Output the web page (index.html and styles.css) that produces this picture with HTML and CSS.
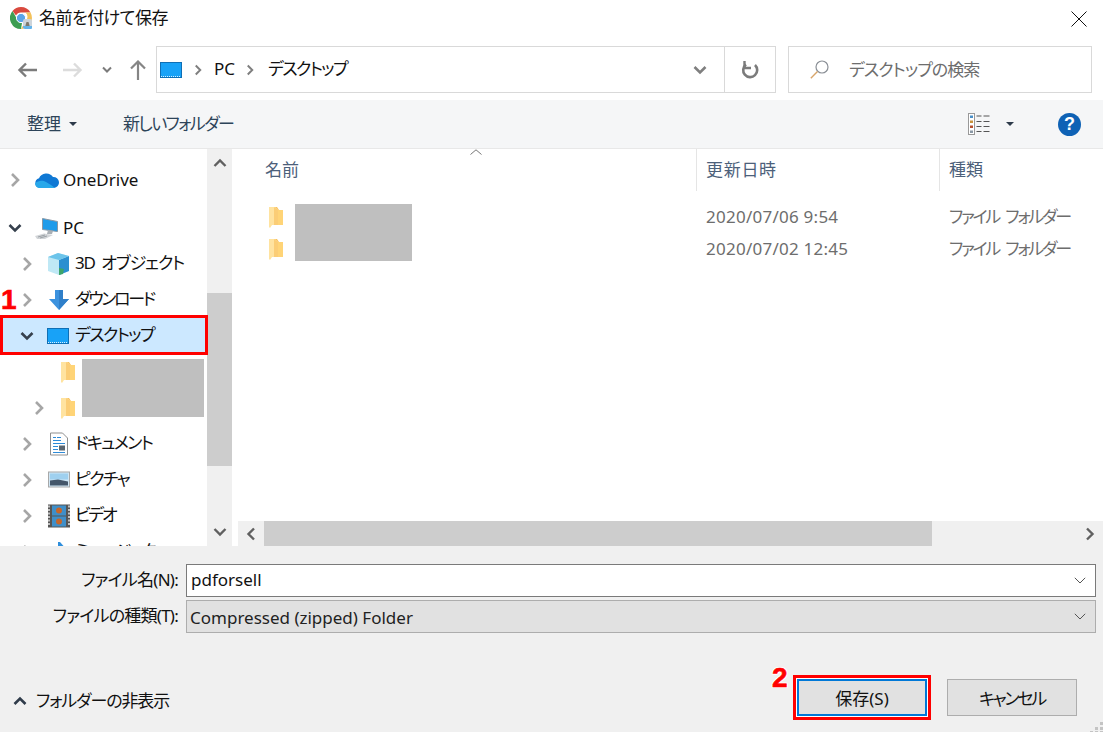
FILE: index.html
```html
<!DOCTYPE html>
<html lang="ja">
<head>
<meta charset="utf-8">
<title>名前を付けて保存</title>
<link rel="stylesheet" href="styles.css">
</head>
<body>
<svg class="sprite" aria-hidden="true">
  <defs>
    <symbol id="chev-r" viewBox="0 0 14 16"><path d="M4 2l6 6-6 6" fill="none" stroke="currentColor" stroke-width="2.6"/></symbol>
    <symbol id="chev-d" viewBox="0 0 14 16"><path d="M1.500 5l5.500 5.500L12.500 5" fill="none" stroke="currentColor" stroke-width="2.600"/></symbol>
    <symbol id="folder" viewBox="0 0 14 21">
      <path d="M3 0h5l2 3h4v15H3z" fill="#f9c262"/>
      <path d="M5 3h9v15H5z" fill="#ffd477"/>
      <path d="M0 0l6 0 2 2 1 1 0 15-6 0-2 3-1-1z" fill="#ffe3a0"/>
      <path d="M5 0l4 3v15H5z" fill="#fbcd76"/>
    </symbol>
    <symbol id="monitor" viewBox="0 0 22 16">
      <rect x=".5" y=".5" width="21" height="15" fill="#18a2f7" stroke="#0f6fb5"/>
      <path d="M1 14.500h20" stroke="#d9f0ff" stroke-width="1" stroke-dasharray="1 1"/>
    </symbol>
  </defs>
</svg>

<div class="dialog">
  <header class="titlebar">
    <svg class="chrome-icon" viewBox="0 0 22 22">
      <path d="M11 0a11 11 0 0 1 9.500 5.500H11a5.500 5.500 0 0 0-5 3L2.500 4A11 11 0 0 1 11 0z" fill="#d9493e"/>
      <path d="M20.500 5.500A11 11 0 0 1 11 22l5-8.500a5.500 5.500 0 0 0-.5-8z" fill="#f3c15a"/>
      <path d="M2.500 4L7 12a5 5 0 0 0 5 4l-1 6A11 11 0 0 1 2.500 4z" fill="#3d9e52"/>
      <circle cx="11" cy="11" r="4.600" fill="#5aa4e8" stroke="#fff"/>
      <rect x="13" y="12" width="9" height="9" rx="2" fill="#cdd4da"/>
      <path d="M15 20l1.500-5h2l1.500 5z" fill="#7d7a6e"/>
      <path d="M13 19h9v2a1 1 0 0 1-1 1h-6a2 2 0 0 1-2-2z" fill="#63b3ea"/>
    </svg>
    <span class="title sp-a">名前を付けて保存</span>
    <svg class="close-icon" viewBox="0 0 16 16"><path d="M.5.500l15 15M15.500.500l-15 15" stroke="#111" stroke-width="1" fill="none"/></svg>
  </header>

  <nav class="navbar">
    <div class="nav-buttons">
      <svg class="nav-back" viewBox="0 0 20 16"><path d="M9 1.500L2.500 8 9 14.500M2.500 8H20" fill="none" stroke="#7b7b7b" stroke-width="2.400"/></svg>
      <svg class="nav-forward" viewBox="0 0 20 16"><path d="M11 1.500L17.500 8 11 14.500M17.500 8H0" fill="none" stroke="#dcdcdc" stroke-width="2.400"/></svg>
      <svg class="nav-recent" viewBox="0 0 10 7"><path d="M1 1.500l4 4 4-4" fill="none" stroke="#7b7b7b" stroke-width="2"/></svg>
      <svg class="nav-up" viewBox="0 0 16 20"><path d="M1 8.500L8 1.500l7 7M8 1.500V20" fill="none" stroke="#858585" stroke-width="2.200"/></svg>
    </div>
    <div class="address">
      <svg class="addr-monitor"><use href="#monitor"/></svg>
      <svg class="addr-sep"><use href="#chev-r"/></svg>
      <span class="addr-pc">PC</span>
      <svg class="addr-sep addr-sep-2"><use href="#chev-r"/></svg>
      <span class="addr-text sp-c">デスクトップ</span>
      <svg class="addr-drop"><use href="#chev-d"/></svg>
      <div class="addr-refresh">
        <svg class="refresh-icon" viewBox="0 0 18 18"><path d="M5 3.500A7 7 0 1 0 14 4" fill="none" stroke="#7b7b7b" stroke-width="2.600"/><path d="M3.500 0v7.500H10" fill="none" stroke="#7b7b7b" stroke-width="2.400" transform="translate(0 -.5)"/></svg>
      </div>
    </div>
    <div class="search">
      <svg class="search-icon" viewBox="0 0 19 19"><circle cx="12" cy="7" r="6" fill="none" stroke="#8a8f96" stroke-width="1.200"/><path d="M7.500 11.500L.8 18.200" stroke="#d8a56a" stroke-width="1.400"/></svg>
      <span class="search-text sp-b">デスクトップの検索</span>
    </div>
  </nav>

  <div class="toolbar">
    <span class="tool-label">整理</span>
    <span class="caret"></span>
    <span class="tool-label tool-new sp-c">新しいフォルダー</span>
    <svg class="view-icon" viewBox="0 0 22 22">
      <rect x=".5" y=".5" width="6" height="21" fill="#fff" stroke="#999"/>
      <rect x="2" y="2.500" width="3" height="2.500" fill="#4a90c8"/>
      <rect x="2" y="7.500" width="3" height="2.500" fill="#c8923a"/>
      <rect x="2" y="12.500" width="3" height="2.500" fill="#b5502d"/>
      <rect x="2" y="17.500" width="3" height="2.500" fill="#8a98a5"/>
      <path d="M8.500 3h5M15.500 3h6M8.500 8.500h5M15.500 8.500h6M8.500 13.500h5M15.500 13.500h6M8.500 18.500h5M15.500 18.500h6" stroke="#555"/>
    </svg>
    <span class="caret caret-view"></span>
    <span class="help">?</span>
  </div>

  <main class="main">
    <div class="tree">
      <div class="row level0 gap-below">
        <svg class="chev chev-right"><use href="#chev-r"/></svg>
        <svg class="row-icon" viewBox="0 0 26 18"><path d="M6 17a5 5 0 0 1-1-9.800A8 8 0 0 1 19 6a5.500 5.500 0 0 1 1 11z" fill="#0f78d4"/><path d="M6 17c-3 0-5-2-5-4.500C4 9 9 9 12 11l5 3 4 3z" fill="#28a8ea"/></svg>
        <span>OneDrive</span>
      </div>
      <div class="row level0">
        <svg class="chev chev-down"><use href="#chev-d"/></svg>
        <svg class="row-icon" viewBox="0 0 26 24"><path d="M8.500 2.500l15 3v10l-15-2z" fill="#1e9bea" stroke="#8a98a5"/><path d="M14 14l-1 4h5l1-3z" fill="#a9b0b6"/><path d="M1 20l9-2.500 9 1.500-8 4H3z" fill="#d2d5d8"/><path d="M4 21l7-2M6 22l7-2" stroke="#9ba1a6"/></svg>
        <span>PC</span>
      </div>
      <div class="row level1">
        <svg class="chev chev-right"><use href="#chev-r"/></svg>
        <svg class="row-icon" viewBox="0 0 26 24"><path d="M2 5l10-4 11 3v15l-10 4L2 19z" fill="#bfe8f5"/><path d="M13 8l10-4v15l-10 4z" fill="#2c8fd0"/><path d="M2 5l11 3 10-4-11-3z" fill="#6cc4ea"/><path d="M13 16l5 1-1 5-4 1z" fill="#3da56a"/></svg>
        <span class="sp-e">3D オブジェクト</span>
      </div>
      <div class="row level1">
        <svg class="chev chev-right"><use href="#chev-r"/></svg>
        <svg class="row-icon" viewBox="0 0 26 22"><path d="M9 1h8v9h6L13 21 3 10h6z" fill="#3c92de"/><path d="M13 1h4v9h6L13 21z" fill="#2f7fc9"/></svg>
        <span class="sp-d">ダウンロード</span>
      </div>
      <div class="row level1 selected">
        <svg class="chev chev-down"><use href="#chev-d"/></svg>
        <svg class="row-icon row-monitor"><use href="#monitor"/></svg>
        <span class="sp-c">デスクトップ</span>
      </div>
      <div class="row level2">
        <span class="chev"></span>
        <svg class="row-folder"><use href="#folder"/></svg>
      </div>
      <div class="row level2">
        <svg class="chev chev-right"><use href="#chev-r"/></svg>
        <svg class="row-folder"><use href="#folder"/></svg>
      </div>
      <div class="row level1">
        <svg class="chev chev-right"><use href="#chev-r"/></svg>
        <svg class="row-icon" viewBox="0 0 26 23"><path d="M4.500.500h12l5 5v17h-17z" fill="#fff" stroke="#8f8f8f"/><path d="M7 5h3M11 5h4M7 8h8M7 11h12M7 14h5M7 17h5M7 20h12" stroke="#2e8bd8"/><rect x="13" y="13" width="6" height="5" fill="#5b6670"/></svg>
        <span class="sp-c">ドキュメント</span>
      </div>
      <div class="row level1">
        <svg class="chev chev-right"><use href="#chev-r"/></svg>
        <svg class="row-icon" viewBox="0 0 26 17"><rect x="2.500" y=".5" width="21" height="15" fill="#cfe6f5" stroke="#a8a8a8"/><rect x="4" y="2" width="18" height="6" fill="#9fd0ef"/><path d="M4 9l8-1 10 2v4H4z" fill="#44566a"/></svg>
        <span class="sp-c">ピクチャ</span>
      </div>
      <div class="row level1">
        <svg class="chev chev-right"><use href="#chev-r"/></svg>
        <svg class="row-icon" viewBox="0 0 26 23"><rect x="2" y="0" width="22" height="23" fill="#555"/><path d="M3 1v21M23 1v21" stroke="#ddd" stroke-width="1.600" stroke-dasharray="2 1.500"/><rect x="6" y="1" width="14" height="10" fill="#3f8fc9"/><rect x="6" y="12" width="14" height="10" fill="#3f8fc9"/><circle cx="13" cy="6" r="3" fill="#c6662b"/><circle cx="13" cy="17" r="3" fill="#c6662b"/></svg>
        <span class="sp-d">ビデオ</span>
      </div>
      <div class="row level1">
        <svg class="chev chev-right"><use href="#chev-r"/></svg>
        <svg class="row-icon" viewBox="0 0 26 22"><path d="M12 1h2l7 8-6-2v10a4 4 0 1 1-3-3.500z" fill="#2f8fdc"/></svg>
        <span class="sp-c">ミュージック</span>
      </div>
      <div class="redact redact-tree"></div>
    </div>

    <div class="vscroll">
      <svg class="scroll-arrow" viewBox="0 0 14 10"><path d="M1.500 8L7 2.500 12.500 8" fill="none" stroke="#606060" stroke-width="2.400"/></svg>
      <div class="vtrack"><div class="vthumb"></div></div>
      <svg class="scroll-arrow" viewBox="0 0 14 10"><path d="M1.500 2L7 7.500 12.500 2" fill="none" stroke="#606060" stroke-width="2.400"/></svg>
    </div>

    <div class="pane">
      <div class="header">
        <div class="col col-name">名前
          <svg class="sort-caret" viewBox="0 0 12 6"><path d="M.5 5.500L6 .8l5.500 4.700" fill="none" stroke="#777"/></svg>
        </div>
        <div class="col col-date sp-f">更新日時</div>
        <div class="col col-type">種類</div>
      </div>
      <div class="files">
        <div class="file">
          <div class="cell-name"><svg class="file-folder"><use href="#folder"/></svg></div>
          <div class="cell-date">2020/07/06 9:54</div>
          <div class="cell-type sp-g">ファイル フォルダー</div>
        </div>
        <div class="file">
          <div class="cell-name"><svg class="file-folder"><use href="#folder"/></svg></div>
          <div class="cell-date">2020/07/02 12:45</div>
          <div class="cell-type sp-g">ファイル フォルダー</div>
        </div>
        <div class="redact redact-list"></div>
      </div>
      <div class="hscroll">
        <svg class="hscroll-arrow" viewBox="0 0 10 14"><path d="M8 1.500L2.500 7 8 12.500" fill="none" stroke="#606060" stroke-width="2.400"/></svg>
        <div class="hthumb"></div>
        <svg class="hscroll-arrow hscroll-next" viewBox="0 0 10 14"><path d="M2 1.500L7.500 7 2 12.500" fill="none" stroke="#606060" stroke-width="2.400"/></svg>
      </div>
    </div>
  </main>

  <section class="bottom">
    <div class="fields">
      <label class="field-label sp-h">ファイル名(N):</label>
      <div class="combo combo-input">
        <span>pdforsell</span>
        <svg class="combo-arrow" viewBox="0 0 12 7"><path d="M.8.800L6 6 11.200.800" fill="none" stroke="#555"/></svg>
      </div>
      <label class="field-label sp-h">ファイルの種類(T):</label>
      <div class="combo combo-select">
        <span>Compressed (zipped) Folder</span>
        <svg class="combo-arrow" viewBox="0 0 12 7"><path d="M.8.800L6 6 11.200.800" fill="none" stroke="#555"/></svg>
      </div>
    </div>
    <div class="footer">
      <div class="hide-folders">
        <svg class="hide-chev" viewBox="0 0 14 10"><path d="M1.500 8L7 2.500 12.500 8" fill="none" stroke="#2f3b4a" stroke-width="2.600"/></svg>
        <span class="sp-i">フォルダーの非表示</span>
      </div>
      <div class="actions">
        <button class="btn btn-save" type="button">保存(S)</button>
        <button class="btn sp-j" type="button">キャンセル</button>
      </div>
    </div>
    <svg class="grip" viewBox="0 0 13 10"><path d="M10 0h3v3h-3zM5 5h3v3H5zM10 5h3v3h-3zM0 9h3v1H0zM5 9h3v1H5zM10 9h3v1h-3z" fill="#c4c4c4"/></svg>
  </section>

  <span class="marker marker-1">1</span>
  <span class="marker marker-2">2</span>
</div>
</body>
</html>
```
FILE: styles.css
```css
* { box-sizing: border-box; }

html, body {
  margin: 0;
  padding: 0;
  background: #fff;
}

body {
  font-family: "Noto Sans", "Noto Sans CJK JP", sans-serif;
  font-size: 17px;
  line-height: 1.2;
  color: #111;
  font-feature-settings: "palt";
}

/* kana in the reference's UI font sets tighter than Noto's */
.sp-a { letter-spacing: -.5px; }
.sp-b { letter-spacing: -.95px; }
.sp-c { letter-spacing: -1.6px; }
.sp-d { letter-spacing: -2.3px; }
.sp-e { letter-spacing: -1.1px; word-spacing: 3px; }
.sp-f { letter-spacing: .7px; }
.sp-g { letter-spacing: -2.2px; word-spacing: 4px; }
.sp-h { letter-spacing: -.75px; }
.sp-i { letter-spacing: -1.1px; }
.sp-j { letter-spacing: -2.2px; }

.sprite { position: absolute; width: 0; height: 0; }

.dialog {
  position: relative;
  width: 1103px;
  height: 732px;
  display: flex;
  flex-direction: column;
  overflow: hidden;
}

/* title bar */
.titlebar {
  height: 46px;
  display: flex;
  align-items: flex-start;
  padding: 7px 16px 0 10px;
}
.chrome-icon { width: 22px; height: 22px; flex: none; }
.title { margin: 1px 0 0 7px; white-space: nowrap; }
.close-icon { width: 16px; height: 16px; margin: 4px 0 0 auto; }

/* navigation */
.navbar {
  height: 47px;
  margin-bottom: 7px;
  display: flex;
  padding-right: 11px;
}
.nav-buttons {
  width: 156px;
  flex: none;
  display: flex;
  align-items: center;
  padding-left: 17px;
}
.nav-back { width: 20px; height: 16px; }
.nav-forward { width: 20px; height: 16px; margin-left: 26px; }
.nav-recent { width: 10px; height: 7px; margin-left: 19px; }
.nav-up { width: 16px; height: 20px; margin-left: 18px; }

.address {
  width: 620px;
  flex: none;
  border: 1px solid #d9d9d9;
  display: flex;
  align-items: center;
  padding-left: 3px;
}
.addr-monitor { width: 22px; height: 16px; flex: none; }
.addr-sep { width: 14px; height: 16px; color: #7f7f7f; margin-left: 9px; flex: none; transform: scale(.75); }
.addr-pc { margin-left: 9px; }
.addr-sep-2 { margin-left: 8px; }
.addr-text { margin-left: 11px; white-space: nowrap; }
.addr-drop { width: 14px; height: 16px; margin-left: auto; color: #7f7f7f; flex: none; }
.addr-refresh {
  width: 51px;
  height: 100%;
  flex: none;
  margin-left: 17px;
  border-left: 1px solid #d9d9d9;
  display: flex;
  align-items: center;
  justify-content: center;
}
.refresh-icon { width: 18px; height: 18px; }

.search {
  flex: 1;
  margin-left: 12px;
  border: 1px solid #d9d9d9;
  display: flex;
  align-items: center;
  padding-left: 21px;
  color: #6d6d6d;
}
.search-icon { width: 19px; height: 19px; flex: none; }
.search-text { margin-left: 20px; padding-top: 2px; white-space: nowrap; }

/* toolbar */
.toolbar {
  height: 49px;
  background: #f5f6f7;
  border-bottom: 1px solid #e8e8e8;
  display: flex;
  align-items: center;
  padding-left: 27px;
  color: #2d4459;
}
.tool-label { white-space: nowrap; }
.caret {
  width: 0;
  height: 0;
  margin-left: 8px;
  border-left: 4px solid transparent;
  border-right: 4px solid transparent;
  border-top: 4px solid #2d3a4a;
}
.tool-new { margin-left: 46px; }
.view-icon { width: 22px; height: 22px; margin-left: auto; flex: none; }
.caret-view { margin-left: 16px; }
.help {
  width: 23px;
  height: 23px;
  margin: 0 22px 0 44px;
  border-radius: 50%;
  background: #0f62b5;
  color: #fff;
  font: bold 18px/23px "Liberation Sans", sans-serif;
  text-align: center;
  flex: none;
}

/* main */
.main {
  height: 397px;
  display: flex;
  background: #fff;
}

.tree {
  position: relative;
  z-index: 1;
  width: 208px;
  flex: none;
  padding-top: 13px;
  overflow: hidden;
}
.row {
  position: relative;
  height: 36px;
  display: flex;
  align-items: center;
  white-space: nowrap;
}
.row.gap-below { margin-bottom: 12px; }
.level0 { padding-left: 8px; }
.level1 { padding-left: 20px; }
.level1 span { margin-top: -2px; }
.level2 { padding-left: 32px; }
.chev { width: 14px; height: 16px; flex: none; margin-right: 12px; }
.chev-right { color: #a6a6a6; }
.chev-down { color: #36404d; }
.row-icon { width: 26px; height: 24px; flex: none; margin-right: 3px; }
.row-monitor { width: 22px; height: 16px; margin: 0 6px 0 1px; }
.row-folder { width: 14px; height: 21px; margin-left: 3px; flex: none; }
.selected { background: #cce8ff; }
.selected::after {
  content: "";
  position: absolute;
  inset: -3px 0 -1px 0;
  border: 3px solid #f00;
}

.redact { position: absolute; background: #bfbfbf; }
.redact-tree { left: 82px; top: 210px; width: 122px; height: 58px; }
.redact-list { left: 57px; top: 13px; width: 117px; height: 57px; }

.vscroll {
  width: 25px;
  flex: none;
  margin-left: -1px;
  background: #f0f0f0;
  display: flex;
  flex-direction: column;
  align-items: center;
}
.scroll-arrow { width: 14px; height: 10px; margin: 9px 0; flex: none; }
.vtrack { flex: 1; width: 100%; padding-top: 116px; }
.vthumb { width: 100%; height: 173px; background: #cdcdcd; }

.pane {
  flex: 1;
  min-width: 0;
  display: flex;
  flex-direction: column;
  margin-left: 6px;
}
.header {
  height: 42px;
  display: flex;
  color: #4c607a;
}
.col {
  display: flex;
  align-items: center;
  position: relative;
}
.col-name { width: 458px; padding-left: 27px; }
.col-date { width: 243px; padding-left: 9px; border-left: 1px solid #e5e5e5; }
.col-type { flex: 1; padding-left: 9px; border-left: 1px solid #e5e5e5; }
.sort-caret { position: absolute; left: 232px; top: 0; width: 12px; height: 6px; }

.files {
  position: relative;
  flex: 1;
  padding-top: 10px;
  color: #6d6d6d;
}
.file {
  height: 32px;
  display: flex;
  align-items: center;
  white-space: nowrap;
}
.cell-name { width: 458px; padding-left: 31px; display: flex; align-items: center; }
.cell-date { width: 243px; padding-left: 10px; letter-spacing: .25px; }
.cell-type { padding-left: 10px; }
.file-folder { width: 14px; height: 21px; }

.hscroll {
  height: 25px;
  flex: none;
  background: #f0f0f0;
  display: flex;
  align-items: center;
}
.hscroll-arrow { width: 10px; height: 14px; margin-left: 8px; flex: none; }
.hthumb { width: 668px; height: 100%; margin-left: 8px; background: #cdcdcd; }
.hscroll-next { margin-left: auto; margin-right: 8px; }

/* bottom */
.bottom {
  position: relative;
  flex: 1;
  background: #f0f0f0;
  padding-top: 18px;
}
.fields {
  display: grid;
  grid-template-columns: 178px 1fr;
  column-gap: 8px;
  row-gap: 3px;
  padding-right: 7px;
}
.field-label {
  align-self: center;
  text-align: right;
  white-space: nowrap;
}
.combo {
  height: 33px;
  display: flex;
  align-items: center;
  justify-content: space-between;
  padding: 0 9px 0 4px;
  white-space: nowrap;
}
.combo-input { background: #fff; border: 1px solid #7a7a7a; }
.combo-select { background: #e1e1e1; border: 1px solid #adadad; color: #222; padding-left: 3px; }
.combo-select span { padding-top: 3px; }
.combo-arrow { width: 12px; height: 7px; flex: none; }

.footer {
  display: flex;
  justify-content: space-between;
  align-items: flex-end;
  margin-top: 46px;
  padding: 0 26px 0 13px;
}
.hide-folders { display: flex; align-items: center; height: 37px; padding-top: 7px; }
.hide-chev { width: 14px; height: 10px; margin-right: 9px; flex: none; }
.actions { display: flex; gap: 20px; }
.btn {
  width: 130px;
  height: 37px;
  background: #e1e1e1;
  border: 1px solid #adadad;
  font-family: inherit;
  font-size: inherit;
  font-feature-settings: inherit;
  color: #111;
  padding: 0;
}
.btn-save {
  border: 2px solid #0078d7;
  box-shadow: 0 0 0 1px #fff, 0 0 0 4px #f00;
}
.grip {
  position: absolute;
  right: 0;
  bottom: 0;
  width: 13px;
  height: 10px;
}

/* annotation numbers */
.marker {
  position: absolute;
  font: bold 28px/1 "Liberation Sans", sans-serif;
  color: #f00;
  -webkit-text-stroke: 0.6px #f00;
  text-shadow: 1px 0 0 #fff, -1px 0 0 #fff, 0 1px 0 #fff, 0 -1px 0 #fff, 1px 1px 0 #fff, -1px -1px 0 #fff, 1px -1px 0 #fff, -1px 1px 0 #fff;
}
.marker-1 { left: 1px; top: 286px; }
.marker-2 { left: 772px; top: 664px; }
```
